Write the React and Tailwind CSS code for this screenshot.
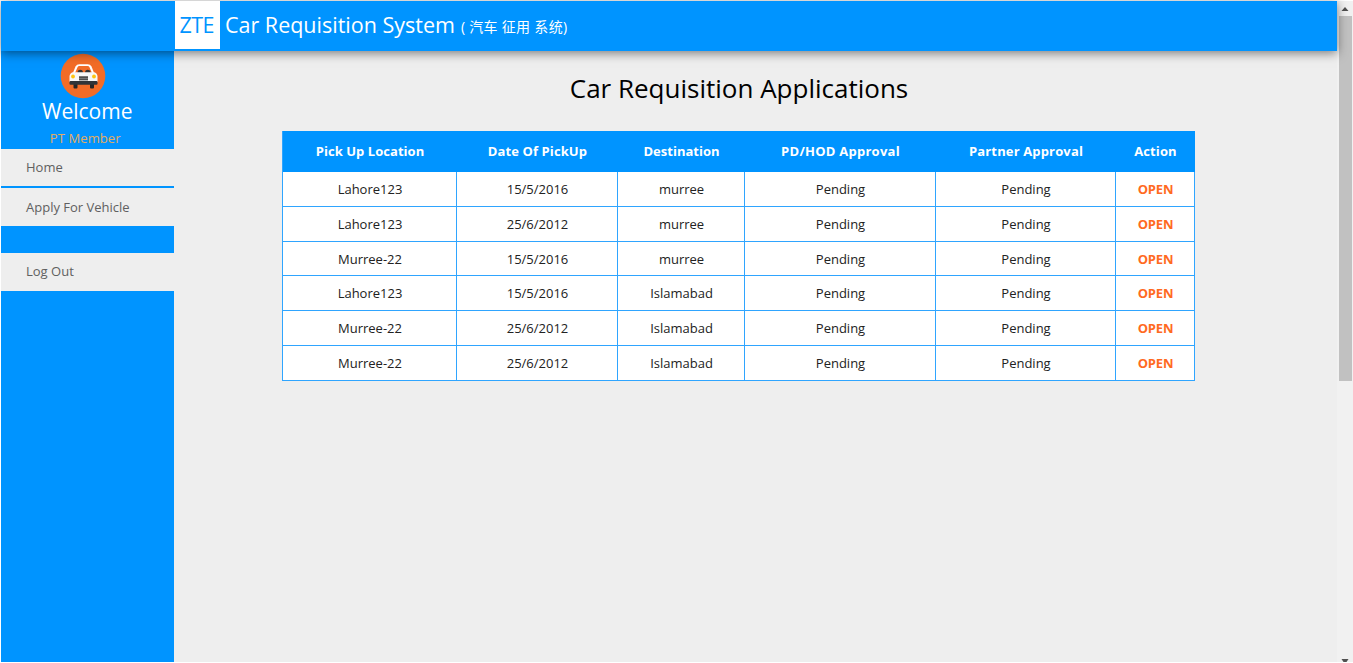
const columns = [
  { label: 'Pick Up Location', tracking: 'tracking-[0.05px]' },
  { label: 'Date Of PickUp', tracking: 'tracking-[0.1px]' },
  { label: 'Destination', tracking: 'tracking-[0px]' },
  { label: 'PD/HOD Approval', tracking: 'tracking-[0.25px]' },
  { label: 'Partner Approval', tracking: 'tracking-[0.15px]' },
  { label: 'Action', tracking: 'tracking-[0.1px]' },
];

const rows = [
  { from: 'Lahore123', date: '15/5/2016', to: 'murree', height: 'h-[35px]' },
  { from: 'Lahore123', date: '25/6/2012', to: 'murree', height: 'h-[35px]' },
  { from: 'Murree-22', date: '15/5/2016', to: 'murree', height: 'h-[34px]' },
  { from: 'Lahore123', date: '15/5/2016', to: 'Islamabad', height: 'h-[35px]' },
  { from: 'Murree-22', date: '25/6/2012', to: 'Islamabad', height: 'h-[35px]' },
  { from: 'Murree-22', date: '25/6/2012', to: 'Islamabad', height: 'h-[35px]' },
];

const gridCols = 'grid grid-cols-[174px_161px_127px_191px_180px_79px]';

function CarBadge() {
  return (
    <svg width="46" height="46" viewBox="0 0 46 46" className="mr-[2px] shrink-0">
      <circle cx="23" cy="23" r="22.3" fill="#f26c27" />
      <path d="M12.500 21 L15.500 13.500 Q16.500 11.300 19.500 11.300 H27.500 Q30.500 11.300 31.500 13.500 L34.500 21 Z" fill="#fff" />
      <path d="M15 20 L17.500 14.300 Q18 13 19.500 13 H27.500 Q29 13 29.500 14.300 L32 20 Z" fill="#f26c27" />
      <path d="M17.500 20 Q17.500 16.800 20.200 16.800 Q23 16.800 23 20 Z M25 20 Q25 16.800 27.700 16.800 Q30.500 16.800 30.500 20 Z" fill="#333" />
      <rect x="13.500" y="30" width="4" height="5.500" rx="1" fill="#262626" />
      <rect x="30" y="30" width="4" height="5.500" rx="1" fill="#262626" />
      <path d="M12.500 19.200 H34.500 Q37.500 20.500 37.500 23.500 V29 H9.500 V23.500 Q9.500 20.500 12.500 19.200 Z" fill="#f8f8f8" />
      <rect x="9.500" y="28" width="28" height="3.800" rx="1" fill="#303438" />
      <rect x="19" y="23" width="9" height="4.500" fill="#777" />
      <path d="M19 24.500 H28 M19 26.500 H28" stroke="#444" strokeWidth=".8" />
      <circle cx="13" cy="23.500" r="1.900" fill="#fdc413" />
      <circle cx="34" cy="23.500" r="1.900" fill="#fdc413" />
    </svg>
  );
}

function NavItem({ label, className }) {
  return (
    <a className={`flex items-center bg-[#eeeeee] pl-[25px] text-[13px] leading-none text-[#606060] ${className}`}>
      {label}
    </a>
  );
}

function Cell({ children, className = '' }) {
  return (
    <div className={`flex items-center justify-center border-r border-b border-[#2fa5ff] pt-[2px] pl-px ${className}`}>
      <span>{children}</span>
    </div>
  );
}

export default function App() {
  return (
    <div className="flex h-[663px] w-[1353px] flex-col overflow-hidden bg-white py-px pl-px font-['Open_Sans','Noto_Sans_CJK_SC',sans-serif] whitespace-nowrap">
      <div className="flex min-h-0 flex-1">
        <div className="flex w-[1336px] flex-col bg-[#eeeeee]">
          <header className="z-10 h-[50px] shrink-0">
            <div className="flex h-[49.500px] bg-[#0094ff] shadow-[0_2px_10px_rgba(0,0,0,0.5)]">
              <div className="ml-[173.500px] flex h-[48px] w-[45.500px] items-center justify-center bg-white text-[21.500px] text-[#0094ff]">
                <span className="mr-px tracking-[-0.5px]">ZTE</span>
              </div>
              <div className="flex h-[48px] items-center pl-[5px] text-white">
                <span className="text-[21.500px]">Car Requisition System</span>
                <span className="ml-[6px] pt-[3px] text-[14px] tracking-[0.3px]">( 汽车 征用 系统)</span>
              </div>
            </div>
          </header>
          <div className="flex min-h-0 flex-1">
            <aside className="flex w-[172.500px] shrink-0 flex-col bg-[#0094ff]">
              <div className="flex h-[98px] flex-col items-center pt-[2px] pr-[7px]">
                <CarBadge />
                <span className="ml-[7px] text-[21px] leading-[25px] text-white">Welcome</span>
                <span className="mt-[7px] ml-[3px] text-[13px] leading-[14px] tracking-[0.1px] text-[#e2ac62]">PT Member</span>
              </div>
              <NavItem label="Home" className="h-[37px]" />
              <NavItem label="Apply For Vehicle" className="mt-[2px] h-[38px]" />
              <NavItem label="Log Out" className="mt-[27px] h-[37.500px]" />
            </aside>
            <main className="flex flex-1 flex-col pl-[0.500px]">
              <h1 className="mt-[19px] mr-[33px] text-center text-[26px] leading-[36px] text-black">
                <span>Car Requisition Applications</span>
              </h1>
              <section className="mt-[25px] ml-[108px] w-[913px] border-l border-[#2fa5ff] bg-white">
                <div className={`${gridCols} h-[41px] bg-[#0094ff] text-[13px] font-bold text-white`}>
                  {columns.map((column) => (
                    <div key={column.label} className="flex items-center justify-center pt-px">
                      <span className={column.tracking}>{column.label}</span>
                    </div>
                  ))}
                </div>
                {rows.map((row, index) => (
                  <div key={index} className={`${gridCols} ${row.height} text-[13px] text-[#222222]`}>
                    <Cell>{row.from}</Cell>
                    <Cell>{row.date}</Cell>
                    <Cell>{row.to}</Cell>
                    <Cell>Pending</Cell>
                    <Cell>Pending</Cell>
                    <Cell className="font-bold tracking-[-0.2px] text-[#ff6a1f]">OPEN</Cell>
                  </div>
                ))}
              </section>
            </main>
          </div>
        </div>
        <div className="flex w-[16px] flex-col items-center bg-[#f1f1f1]">
          <svg width="13" height="15" viewBox="0 0 13 15" className="shrink-0">
            <path d="M2.500 10 L6 6 L9.500 10 Z" fill="#505050" />
          </svg>
          <div className="h-[364.500px] w-[13px] bg-[#c1c1c1]" />
          <svg width="13" height="3" viewBox="0 0 13 3" className="mt-auto shrink-0">
            <path d="M2.500 0 H9.500 L7.500 3 H4.500 Z" fill="#505050" />
          </svg>
        </div>
      </div>
    </div>
  );
}
